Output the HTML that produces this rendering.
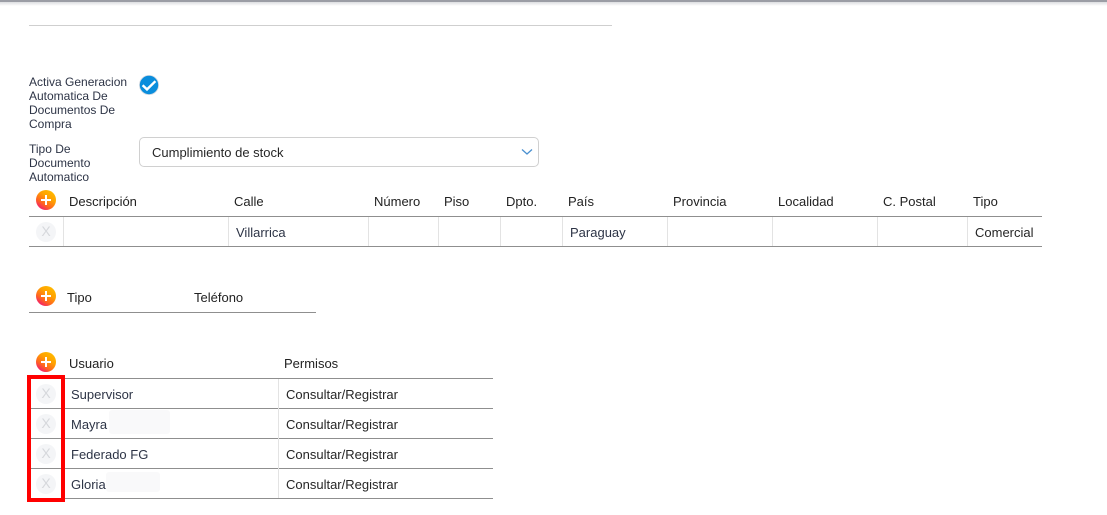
<!DOCTYPE html>
<html lang="es">
<head>
<meta charset="utf-8">
<title>Formulario</title>
<style>
html,body{margin:0;padding:0;background:#fff;}
body{position:relative;width:1107px;height:515px;overflow:hidden;font-family:"Liberation Sans",sans-serif;font-size:13px;color:#2d3446;}
.a{position:absolute;white-space:nowrap;line-height:16px;}
.h{color:#222;}
.d{color:#262626;}
.l{position:absolute;white-space:nowrap;font-size:12px;line-height:14px;left:29px;color:#2d3446;}
.hl{position:absolute;height:1px;background:#8f8f8f;}
.vl{position:absolute;width:1px;background:#e3e3e3;}
.plus{position:absolute;left:36px;width:20px;height:20px;border-radius:50%;background:linear-gradient(215deg,#ffc400 0%,#ffa200 38%,#ff6420 66%,#f0107a 92%);}
.plus:before{content:"";position:absolute;left:5px;top:9px;width:10px;height:1.6px;background:#fff;}
.plus:after{content:"";position:absolute;left:9.2px;top:5px;width:1.6px;height:10px;background:#fff;}
.x{position:absolute;left:36px;width:20px;height:20px;border-radius:50%;background:#f4f5f7;color:#d6d8dc;font-size:14px;line-height:18px;text-align:center;}
</style>
</head>
<body>
<div style="position:absolute;left:0;top:0;width:1107px;height:2px;background:#9b9da5;"></div>
<div style="position:absolute;left:0;top:2px;width:1107px;height:4px;background:linear-gradient(#dcdde0,#fff);"></div>
<div style="position:absolute;left:29px;top:25px;width:583px;height:1px;background:#cfcfcf;"></div>

<div class="l" style="top:75px;">Activa Generacion<br>Automatica De<br>Documentos De<br>Compra</div>
<svg style="position:absolute;left:139px;top:75px;" width="20" height="20" viewBox="0 0 20 20">
<circle cx="10" cy="10" r="9.6" fill="#0a8ddc" stroke="#d5dbe2" stroke-width="0.8"/>
<path d="M3.6 10.2 L8 14.4 L16.4 6.2" fill="none" stroke="#fff" stroke-width="2.4"/>
</svg>

<div class="l" style="top:142px;">Tipo De<br>Documento<br>Automatico</div>
<div style="position:absolute;left:139px;top:137px;width:398px;height:28px;border:1px solid #d0d0d0;border-radius:5px;background:#fff;"></div>
<div class="a d" style="left:152px;top:145px;">Cumplimiento de stock</div>
<svg style="position:absolute;left:521px;top:148px;" width="12" height="8" viewBox="0 0 12 8">
<path d="M1 1.5 L6 6 L11 1.5" fill="none" stroke="#4a90d0" stroke-width="1.3"/>
</svg>

<div class="plus" style="top:190px;"></div>
<div class="a h" style="left:69px;top:194px;">Descripción</div>
<div class="a h" style="left:234px;top:194px;">Calle</div>
<div class="a h" style="left:374px;top:194px;">Número</div>
<div class="a h" style="left:444px;top:194px;">Piso</div>
<div class="a h" style="left:506px;top:194px;">Dpto.</div>
<div class="a h" style="left:568px;top:194px;">País</div>
<div class="a h" style="left:673px;top:194px;">Provincia</div>
<div class="a h" style="left:778px;top:194px;">Localidad</div>
<div class="a h" style="left:883px;top:194px;">C. Postal</div>
<div class="a h" style="left:973px;top:194px;">Tipo</div>
<div class="hl" style="left:29px;top:216px;width:1013px;"></div>
<div class="hl" style="left:29px;top:246px;width:1013px;"></div>
<div class="vl" style="left:63px;top:217px;height:29px;"></div>
<div class="vl" style="left:228px;top:217px;height:29px;"></div>
<div class="vl" style="left:368px;top:217px;height:29px;"></div>
<div class="vl" style="left:438px;top:217px;height:29px;"></div>
<div class="vl" style="left:500px;top:217px;height:29px;"></div>
<div class="vl" style="left:562px;top:217px;height:29px;"></div>
<div class="vl" style="left:667px;top:217px;height:29px;"></div>
<div class="vl" style="left:772px;top:217px;height:29px;"></div>
<div class="vl" style="left:877px;top:217px;height:29px;"></div>
<div class="vl" style="left:967px;top:217px;height:29px;"></div>
<div class="x" style="top:222px;">X</div>
<div class="a" style="left:236px;top:225px;">Villarrica</div>
<div class="a" style="left:570px;top:225px;">Paraguay</div>
<div class="a d" style="left:975px;top:225px;">Comercial</div>

<div class="plus" style="top:286px;"></div>
<div class="a h" style="left:67px;top:290px;">Tipo</div>
<div class="a h" style="left:194px;top:290px;">Teléfono</div>
<div class="hl" style="left:29px;top:312px;width:287px;"></div>

<div class="plus" style="top:352px;"></div>
<div class="a h" style="left:69px;top:356px;">Usuario</div>
<div class="a h" style="left:284px;top:356px;">Permisos</div>
<div class="hl" style="left:29px;top:378px;width:464px;"></div>
<div class="hl" style="left:29px;top:408px;width:464px;"></div>
<div class="hl" style="left:29px;top:438px;width:464px;"></div>
<div class="hl" style="left:29px;top:468px;width:464px;"></div>
<div class="hl" style="left:29px;top:498px;width:464px;"></div>
<div class="vl" style="left:63px;top:379px;height:119px;"></div>
<div class="vl" style="left:278px;top:379px;height:119px;"></div>

<div style="position:absolute;left:109px;top:410px;width:61px;height:24px;background:#f9f9fa;border-radius:3px;"></div>
<div style="position:absolute;left:106px;top:472px;width:54px;height:20px;background:#f9f9fa;border-radius:3px;"></div>

<div class="x" style="top:384px;">X</div>
<div class="x" style="top:414px;">X</div>
<div class="x" style="top:444px;">X</div>
<div class="x" style="top:474px;">X</div>
<div class="a" style="left:71px;top:387px;">Supervisor</div>
<div class="a" style="left:71px;top:417px;">Mayra</div>
<div class="a" style="left:71px;top:447px;">Federado FG</div>
<div class="a" style="left:71px;top:477px;">Gloria</div>
<div class="a d" style="left:286px;top:387px;">Consultar/Registrar</div>
<div class="a d" style="left:286px;top:417px;">Consultar/Registrar</div>
<div class="a d" style="left:286px;top:447px;">Consultar/Registrar</div>
<div class="a d" style="left:286px;top:477px;">Consultar/Registrar</div>

<div style="position:absolute;left:27px;top:375px;width:30px;height:119px;border:4px solid #f00;"></div>
</body>
</html>
